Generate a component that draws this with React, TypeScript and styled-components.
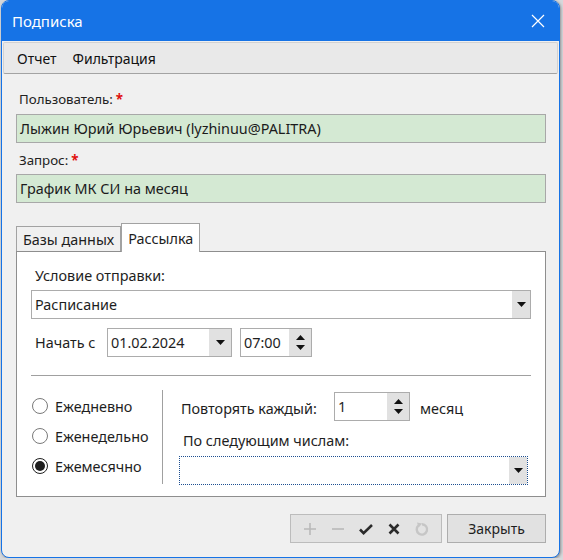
import * as React from 'react';
import styled, { createGlobalStyle } from 'styled-components';

const GlobalStyle = createGlobalStyle`
  html, body {
    margin: 0;
    padding: 0;
    background: #d6d8db;
  }
  body {
    font-family: "Noto Sans", "Open Sans", sans-serif;
    font-size: 13px;
    color: #1e1e1e;
  }
`;

const Window = styled.div`
  width: 559px;
  height: 558px;
  margin-left: 1px;
  box-sizing: border-box;
  border: 1px solid #1673e6;
  border-radius: 8px;
  overflow: hidden;
  background: #f0f0f0;
  display: flex;
  flex-direction: column;
  box-shadow: 1px 1px 3px rgba(0, 0, 0, 0.35);
`;

const TitleBar = styled.div`
  height: 40px;
  flex-shrink: 0;
  background: #1673e6;
  color: #fff;
  display: flex;
  align-items: center;
  justify-content: space-between;
  padding: 0 14px 0 10px;
  font-size: 15px;
`;

const CloseButton = styled.div`
  width: 14px;
  height: 14px;
  display: flex;
`;

const MenuBar = styled.div`
  height: 32px;
  margin: 1px 1px 0;
  box-sizing: border-box;
  background: #e9e9e9;
  border: 1px solid #d2d2d2;
  border-bottom-color: #a3a3a3;
  border-radius: 2px;
  display: flex;
  align-items: center;
  gap: 16px;
  padding-left: 13px;
  font-size: 14px;
  color: #111;
`;

const Content = styled.div`
  flex: 1;
  display: flex;
  flex-direction: column;
  padding: 0 13px 0 14px;
`;

const Label = styled.div<{ $top: number }>`
  height: 20px;
  line-height: 20px;
  margin-top: ${({ $top }) => $top}px;
  padding-left: 3px;
  font-size: 13.3px;
  color: #222;
`;

const Required = styled.span`
  color: #e0100f;
  font-weight: bold;
  margin-left: 3px;
`;

const ReadOnlyField = styled.div<{ $top: number }>`
  height: 29px;
  box-sizing: border-box;
  margin-top: ${({ $top }) => $top}px;
  border: 1px solid #a8a8a8;
  background: #d4e9d3;
  display: flex;
  align-items: center;
  padding-left: 3px;
  font-size: 14.4px;
  color: #1b1b1b;
`;

const TabStrip = styled.div`
  margin-top: 20px;
  height: 28px;
  display: flex;
  align-items: flex-end;
`;

const Tab = styled.div<{ $active?: boolean }>`
  height: ${({ $active }) => ($active ? 29 : 25)}px;
  box-sizing: border-box;
  border: 1px solid #a2a2a2;
  border-bottom: none;
  margin-bottom: ${({ $active }) => ($active ? -1 : 0)}px;
  background: ${({ $active }) => ($active ? '#fff' : '#f0f0f0')};
  padding: 0 ${({ $active }) => ($active ? 6 : 6)}px;
  display: flex;
  align-items: center;
  font-size: 14.4px;
  position: relative;
  z-index: ${({ $active }) => ($active ? 1 : 0)};
`;

const Panel = styled.div`
  height: 246px;
  box-sizing: border-box;
  border: 1px solid #8e8e8e;
  background: #fff;
  padding: 0 14px;
  display: flex;
  flex-direction: column;
  font-size: 14.4px;
`;

const PanelLabel = styled.div<{ $top: number }>`
  height: 20px;
  line-height: 20px;
  margin-top: ${({ $top }) => $top}px;
  padding-left: 4px;
`;

const Combo = styled.div<{ $top: number; $focused?: boolean }>`
  height: 29px;
  box-sizing: border-box;
  margin-top: ${({ $top }) => $top}px;
  border: 1px ${({ $focused }) => ($focused ? 'dotted #1d4f91' : 'solid #acacac')};
  background: #fff;
  display: flex;
  align-items: stretch;
`;

const ComboText = styled.div`
  flex: 1;
  display: flex;
  align-items: center;
  padding-left: 3px;
`;

const DropButton = styled.div<{ $width?: number }>`
  width: ${({ $width }) => $width ?? 18}px;
  background: #e1e1e1;
  display: flex;
  align-items: center;
  justify-content: center;
`;

const StartRow = styled.div`
  margin-top: 9px;
  height: 29px;
  display: flex;
  align-items: center;
`;

const StartLabel = styled.div`
  width: 72px;
  padding-left: 4px;
`;

const Field = styled.div<{ $width: number; $ml?: number }>`
  width: ${({ $width }) => $width}px;
  height: 29px;
  box-sizing: border-box;
  margin-left: ${({ $ml }) => $ml ?? 0}px;
  border: 1px solid #acacac;
  background: #fff;
  display: flex;
  align-items: stretch;
`;

const SpinButtons = styled.div`
  width: 22px;
  background: #e1e1e1;
  display: flex;
  flex-direction: column;
  align-items: center;
  justify-content: center;
  gap: 5px;
`;

const Separator = styled.div`
  margin-top: 18px;
  height: 1px;
  background: #a0a0a0;
`;

const Lower = styled.div`
  margin-top: 14px;
  display: flex;
`;

const RadioColumn = styled.div`
  width: 131px;
  padding-top: 1px;
  display: flex;
  flex-direction: column;
`;

const RadioItem = styled.div`
  height: 30px;
  display: flex;
  align-items: center;
  gap: 7px;
  padding-left: 1px;
`;

const RadioCircle = styled.div<{ $checked?: boolean }>`
  width: 16px;
  height: 16px;
  box-sizing: border-box;
  border-radius: 50%;
  border: 1px solid ${({ $checked }) => ($checked ? '#1e1e1e' : '#7a7a7a')};
  background: #fff;
  display: flex;
  align-items: center;
  justify-content: center;
  &::after {
    content: '';
    width: 10px;
    height: 10px;
    border-radius: 50%;
    background: ${({ $checked }) => ($checked ? '#1e1e1e' : 'transparent')};
  }
`;

const VDivider = styled.div`
  width: 1px;
  height: 94px;
  background: #a0a0a0;
`;

const RightColumn = styled.div`
  flex: 1;
  padding: 0 3px 0 16px;
  display: flex;
  flex-direction: column;
`;

const RepeatRow = styled.div`
  margin-top: 2px;
  height: 29px;
  display: flex;
  align-items: center;
`;

const RepeatLabel = styled.div`
  width: 153px;
  padding-left: 2px;
  margin-top: 4px;
`;

const Unit = styled.div`
  margin-left: 10px;
  margin-top: 4px;
`;

const FieldText = styled.div`
  flex: 1;
  display: flex;
  align-items: center;
  padding-left: 3px;
`;

const Footer = styled.div`
  margin-top: 17px;
  display: flex;
  justify-content: flex-end;
  gap: 5px;
`;

const ToolGroup = styled.div`
  width: 152px;
  height: 29px;
  box-sizing: border-box;
  border: 1px solid #bcbcbc;
  background: #e3e3e3;
  display: flex;
  align-items: center;
  padding-left: 11px;
  gap: 12px;
`;

const ToolIcon = styled.div`
  width: 16px;
  height: 16px;
  display: flex;
`;

const CloseDialogButton = styled.div`
  width: 99px;
  height: 29px;
  box-sizing: border-box;
  border: 1px solid #adadad;
  background: #e1e1e1;
  display: flex;
  align-items: center;
  justify-content: center;
  font-size: 14px;
`;

const ArrowDown = () => (
  <svg width="9" height="5" viewBox="0 0 9 5">
    <path d="M0 0h9L4.5 5z" fill="#111" />
  </svg>
);

const ArrowUp = () => (
  <svg width="9" height="5" viewBox="0 0 9 5">
    <path d="M0 5h9L4.5 0z" fill="#111" />
  </svg>
);

const Spinner = () => (
  <SpinButtons>
    <ArrowUp />
    <ArrowDown />
  </SpinButtons>
);

const App: React.FC = () => {
  const radios = [
    { label: 'Ежедневно', checked: false },
    { label: 'Еженедельно', checked: false },
    { label: 'Ежемесячно', checked: true },
  ];

  return (
    <>
      <GlobalStyle />
      <Window>
        <TitleBar>
          <span>Подписка</span>
          <CloseButton>
            <svg width="14" height="14" viewBox="0 0 14 14">
              <path d="M1 1L13 13M13 1L1 13" stroke="#fff" strokeWidth="1.2" />
            </svg>
          </CloseButton>
        </TitleBar>
        <MenuBar>
          <span>Отчет</span>
          <span>Фильтрация</span>
        </MenuBar>
        <Content>
          <Label $top={15}>
            Пользователь:<Required>*</Required>
          </Label>
          <ReadOnlyField $top={5}>Лыжин Юрий Юрьевич (lyzhinuu@PALITRA)</ReadOnlyField>
          <Label $top={7}>
            Запрос:<Required>*</Required>
          </Label>
          <ReadOnlyField $top={4}>График МК СИ на месяц</ReadOnlyField>

          <TabStrip>
            <Tab>Базы данных</Tab>
            <Tab $active>Рассылка</Tab>
          </TabStrip>
          <Panel>
            <PanelLabel $top={14}>Условие отправки:</PanelLabel>
            <Combo $top={4}>
              <ComboText>Расписание</ComboText>
              <DropButton>
                <ArrowDown />
              </DropButton>
            </Combo>
            <StartRow>
              <StartLabel>Начать с</StartLabel>
              <Field $width={125}>
                <FieldText>01.02.2024</FieldText>
                <DropButton $width={22}>
                  <ArrowDown />
                </DropButton>
              </Field>
              <Field $width={72} $ml={8}>
                <FieldText>07:00</FieldText>
                <Spinner />
              </Field>
            </StartRow>
            <Separator />
            <Lower>
              <RadioColumn>
                {radios.map((r) => (
                  <RadioItem key={r.label}>
                    <RadioCircle $checked={r.checked} />
                    {r.label}
                  </RadioItem>
                ))}
              </RadioColumn>
              <VDivider />
              <RightColumn>
                <RepeatRow>
                  <RepeatLabel>Повторять каждый:</RepeatLabel>
                  <Field $width={76}>
                    <FieldText>1</FieldText>
                    <Spinner />
                  </Field>
                  <Unit>месяц</Unit>
                </RepeatRow>
                <PanelLabel $top={10}>По следующим числам:</PanelLabel>
                <Combo $top={5} $focused>
                  <ComboText />
                  <DropButton>
                    <ArrowDown />
                  </DropButton>
                </Combo>
              </RightColumn>
            </Lower>
          </Panel>

          <Footer>
            <ToolGroup>
              <ToolIcon>
                <svg width="16" height="16" viewBox="0 0 16 16">
                  <path d="M8 2v12M2 8h12" stroke="#b9b9b9" strokeWidth="1.6" />
                </svg>
              </ToolIcon>
              <ToolIcon>
                <svg width="16" height="16" viewBox="0 0 16 16">
                  <path d="M2 8h12" stroke="#b9b9b9" strokeWidth="1.6" />
                </svg>
              </ToolIcon>
              <ToolIcon>
                <svg width="16" height="16" viewBox="0 0 16 16">
                  <path
                    d="M2 8.5l3.6 3.6L14 4"
                    stroke="#2b2b2b"
                    strokeWidth="2.6"
                    fill="none"
                  />
                </svg>
              </ToolIcon>
              <ToolIcon>
                <svg width="16" height="16" viewBox="0 0 16 16">
                  <path d="M3.5 3.5l9 9M12.5 3.5l-9 9" stroke="#2b2b2b" strokeWidth="2.6" />
                </svg>
              </ToolIcon>
              <ToolIcon>
                <svg width="16" height="16" viewBox="0 0 16 16">
                  <path
                    d="M4.6 4.4A5.2 5.2 0 1 0 8 3.2"
                    stroke="#c6c6c6"
                    strokeWidth="2.4"
                    fill="none"
                  />
                  <path d="M3 1.6L8.2 2.4 4.6 6.6z" fill="#c6c6c6" />
                </svg>
              </ToolIcon>
            </ToolGroup>
            <CloseDialogButton>Закрыть</CloseDialogButton>
          </Footer>
        </Content>
      </Window>
    </>
  );
};

export default App;
